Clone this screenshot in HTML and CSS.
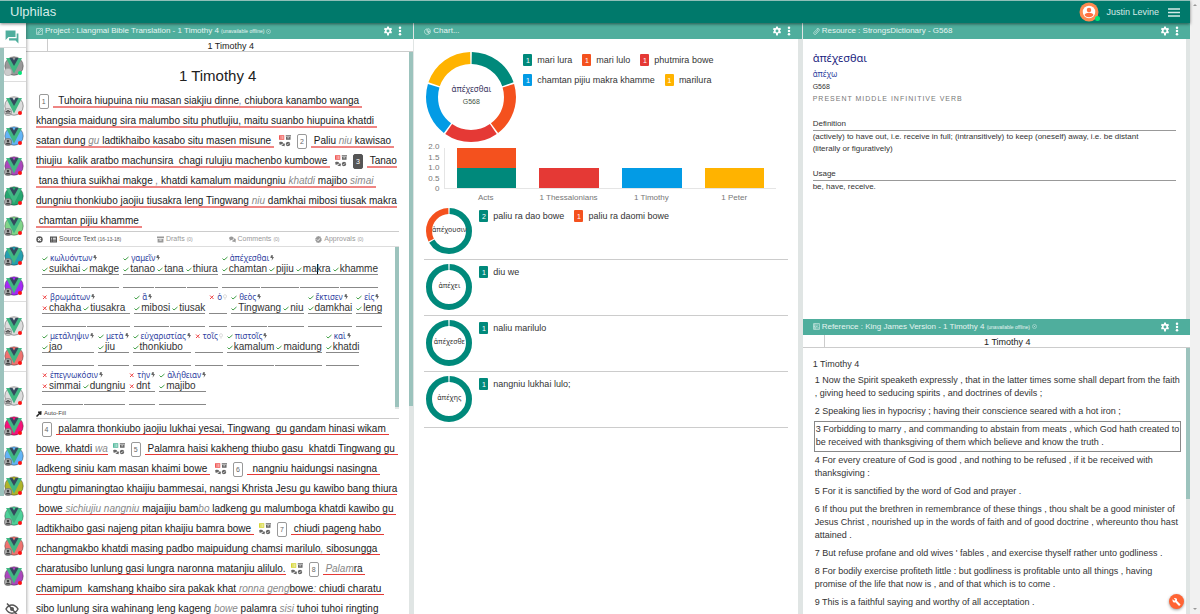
FILE: index.html
```html
<!DOCTYPE html>
<html lang="en">
<head>
<meta charset="utf-8">
<title>Ulphilas</title>
<link rel="stylesheet" href="styles.css">
</head>
<body>
<svg class="defs" aria-hidden="true">
  <symbol id="gear" viewBox="0 0 24 24"><path fill="currentColor" fill-rule="evenodd" d="M10 1h4l.6 3.3 2 1.1 3.100-1.200 2 3.500-2.500 2.200v2.200l2.500 2.200-2 3.500-3.100-1.200-2 1.200L14 23h-4l-.6-5.200-2-1.200-3.100 1.200-2-3.500 2.500-2.200V9.900L2.300 7.700l2-3.500 3.100 1.200 2-1.100zM12 8.500a3.500 3.500 0 1 0 0 7 3.500 3.500 0 0 0 0-7z"/></symbol>
  <symbol id="dots" viewBox="0 0 24 24"><g fill="currentColor"><circle cx="12" cy="4" r="3"/><circle cx="12" cy="12" r="3"/><circle cx="12" cy="20" r="3"/></g></symbol>
  <symbol id="edit" viewBox="0 0 24 24"><path fill="none" stroke="currentColor" stroke-width="2" d="M2 2h20v20H2zM6 18l2-5L18 3M9 18L21 6M6 18l5-1"/></symbol>
  <symbol id="ring" viewBox="0 0 24 24"><circle cx="12" cy="12" r="10" fill="none" stroke="currentColor" stroke-width="2"/><path stroke="currentColor" stroke-width="2" d="M8 8l8 8M16 8l-8 8"/></symbol>
  <symbol id="pie" viewBox="0 0 24 24"><path fill="none" stroke="currentColor" stroke-width="2" d="M10 3a9.500 9.500 0 1 0 8 16l-8-7zM13 2a9 9 0 0 1 9 9h-9zM13 13h9a9 9 0 0 1-3 6z"/></symbol>
  <symbol id="clip" viewBox="0 0 24 24"><path fill="none" stroke="currentColor" stroke-width="2" d="M8 17L17 7a2 2 0 0 0-3-3L4 14a4.500 4.500 0 0 0 6 7L21 9a5.500 5.500 0 0 0-8-7"/></symbol>
  <symbol id="book" viewBox="0 0 24 24"><path fill="none" stroke="currentColor" stroke-width="2" d="M2 2h20v20H2zM7 2v20M10 7h9M10 12h6M2 7h5M2 12h5M2 17h20"/></symbol>
  <symbol id="check" viewBox="0 0 12 12"><path fill="none" stroke="#43a047" stroke-width="2" d="M1 7l3 3 7-6"/></symbol>
  <symbol id="cross" viewBox="0 0 12 12"><path stroke="#ef4444" stroke-width="2" d="M2 3l7 7M9 3l-7 7"/></symbol>
  <symbol id="bolt" viewBox="0 0 12 16"><path fill="#666" d="M3 0h6L8 5h4L5 16l1-8H1z"/></symbol>
  <symbol id="bulb" viewBox="0 0 12 16"><path fill="none" stroke="#bbb" stroke-width="1.500" d="M4 11C0 7 1 1 6 1s6 6 2 10zM4 14h4"/></symbol>
  <symbol id="text-box" viewBox="0 0 24 20"><path fill="currentColor" fill-rule="evenodd" d="M0 0h24v20H0zM4 4v3h3V4zm6 0v3h10V4zM4 9v2h3V9zm6 0v2h10V9zM4 14v2h3v-2zm6 0v2h10v-2z"/></symbol>
  <symbol id="archive" viewBox="0 0 24 20"><path fill="currentColor" fill-rule="evenodd" d="M0 0h24v6H0zM2 8h20v12H2zM8 10v3h8v-3z"/></symbol>
  <symbol id="comments" viewBox="0 0 24 20"><path fill="currentColor" d="M8 0c5 0 8 3 8 6s-3 6-8 6l-6 2 1-4C-2 6 1 0 8 0zM18 6c6 2 7 7 4 9l2 5-6-2c-4 0-7-1-8-4 6 0 8-4 8-8z"/></symbol>
  <symbol id="approved" viewBox="0 0 24 24"><path fill="currentColor" d="M12 0l3 2h4l1 4 3 3-1 3 1 4-3 2-2 4h-4l-3 2-3-2H5l-1-4-3-3 1-3-1-4 3-2 2-4h3z"/><path fill="none" stroke="#fff" stroke-width="3" d="M6 12l4 4 8-8"/></symbol>
  <symbol id="quad" viewBox="0 0 24 24">
    <use href="#text-box" x="0" y="0" width="11" height="10"/>
    <g color="#666"><use href="#archive" x="13" y="0" width="11" height="10"/><use href="#comments" x="0" y="13" width="12" height="10"/><use href="#approved" x="13" y="13" width="10" height="10"/></g>
  </symbol>
  <symbol id="vue" viewBox="0 0 40 40">
    <circle cx="20" cy="20" r="18.500" fill="currentColor" stroke="#000" stroke-opacity=".35" stroke-width="2"/>
    <path fill="#41b883" d="M4 4h9l7 12 7-12h9L20 35z"/>
    <path fill="#35495e" d="M11 4h6l3 5 3-5h6l-9 16z"/>
  </symbol>
  <symbol id="person" viewBox="0 0 16 16"><circle cx="8" cy="8" r="7.500" fill="#aaa" stroke="#555"/><circle cx="8" cy="6" r="2.500" fill="#444"/><path fill="#444" d="M3 13c0-5 10-5 10 0z"/></symbol>
  <symbol id="group" viewBox="0 0 16 16"><circle cx="8" cy="8" r="7.500" fill="#ccc" stroke="#777"/><g fill="#444"><circle cx="8" cy="6" r="2"/><circle cx="4.500" cy="7" r="1.500"/><circle cx="11.500" cy="7" r="1.500"/><path d="M2 11c1-3 11-3 12 0z"/></g></symbol>
  <symbol id="blank" viewBox="0 0 16 16"><circle cx="8" cy="8" r="7.500" fill="#ccc" stroke="#999"/></symbol>
</svg>

<div class="app">
  <div class="window">
    <header class="topbar">
      <h1 class="brand">Ulphilas</h1>
      <div class="account">
        <span class="me"><svg viewBox="0 0 40 40"><circle cx="20" cy="20" r="19" fill="#ff8a50"/><circle cx="20" cy="20" r="12.500" fill="#fff"/><circle cx="20" cy="16" r="4.500" fill="#ff7043"/><path fill="#ff7043" d="M11 26c2-6 16-6 18 0-4 6-14 6-18 0z"/></svg><i class="online"></i></span>
        <span>Justin Levine</span>
        <button class="icon-btn" aria-label="Menu"><svg class="burger" viewBox="0 0 12 9"><path stroke="#d5ebe8" stroke-width="1.500" d="M0 1h12M0 4.500h12M0 8h12"/></svg></button>
      </div>
    </header>

    <div class="main">
      <nav class="sidebar" aria-label="Conversations">
        <button class="chat" aria-label="Chat"><svg viewBox="0 0 24 24"><path fill="#4fae9d" d="M1 1h17v11H6l-5 5zM20 6h3v17l-5-5H7v-4h13z"/></svg></button>
        <div class="people">
          <div class="rail"><div class="thumb people-thumb"></div></div>
          <div class="people-list">
            <div class="crowd first"><span class="av c-gray"><svg><use href="#vue"/></svg><svg class="kind"><use href="#blank"/></svg><i class="on"></i></span></div>
            <div class="crowd">
              <span class="av c-light"><svg><use href="#vue"/></svg><svg class="kind"><use href="#group"/></svg><i></i></span>
              <span class="av c-blue"><svg><use href="#vue"/></svg><svg class="kind"><use href="#person"/></svg><i></i></span>
              <span class="av c-purple"><svg><use href="#vue"/></svg><svg class="kind"><use href="#person"/></svg><i></i></span>
              <span class="av c-green"><svg><use href="#vue"/></svg><svg class="kind"><use href="#person"/></svg><i></i></span>
              <span class="av c-lime"><svg><use href="#vue"/></svg><svg class="kind"><use href="#person"/></svg><i></i></span>
              <span class="av c-teal"><svg><use href="#vue"/></svg><svg class="kind"><use href="#person"/></svg><i></i></span>
              <span class="av c-violet"><svg><use href="#vue"/></svg><svg class="kind"><use href="#person"/></svg><i></i></span>
            </div>
            <div class="crowd">
              <span class="av c-light"><svg><use href="#vue"/></svg><svg class="kind"><use href="#group"/></svg><i></i></span>
              <span class="av c-red"><svg><use href="#vue"/></svg><svg class="kind"><use href="#person"/></svg><i></i></span>
            </div>
            <div class="crowd">
              <span class="av c-light"><svg><use href="#vue"/></svg><svg class="kind"><use href="#group"/></svg><i></i></span>
              <span class="av c-pink"><svg><use href="#vue"/></svg><svg class="kind"><use href="#person"/></svg><i></i></span>
              <span class="av c-blue"><svg><use href="#vue"/></svg><svg class="kind"><use href="#person"/></svg><i></i></span>
              <span class="av c-olive"><svg><use href="#vue"/></svg><svg class="kind"><use href="#person"/></svg><i></i></span>
              <span class="av c-mint"><svg><use href="#vue"/></svg><svg class="kind"><use href="#person"/></svg><i></i></span>
              <span class="av c-red"><svg><use href="#vue"/></svg><svg class="kind"><use href="#person"/></svg><i></i></span>
              <span class="av c-purple"><svg><use href="#vue"/></svg><svg class="kind"><use href="#person"/></svg><i></i></span>
            </div>
          </div>
        </div>
        <button class="hide" aria-label="Hide"><svg viewBox="0 0 28 24"><path fill="none" stroke="#555" stroke-width="3" d="M2 12c6-11 18-11 24 0-6 11-18 11-24 0zM4 1l20 22"/><circle cx="14" cy="12" r="4" fill="#555"/></svg></button>
      </nav>

      <section class="panel">
        <header class="bar"><svg class="bar-icon"><use href="#edit"/></svg><h2>Project : Liangmai Bible Translation - 1 Timothy 4 <small>(unavailable offline)</small></h2><svg class="ring"><use href="#ring"/></svg>
          <button class="icon-btn gear" aria-label="Settings"><svg><use href="#gear"/></svg></button><button class="icon-btn" aria-label="More"><svg><use href="#dots"/></svg></button></header>
        <div class="subbar"><span class="corner"></span><span class="where">1 Timothy 4</span></div>
        <div class="scroller">
          <div class="chapter">
            <h3 class="chapter-title">1 Timothy 4</h3>
            <p class="verses soft"> <b class="no">1</b><span class="t">  Tuhoira hiupuina niu masan siakjiu dinne<em>,</em> chiubora kanambo wanga </span>
<span class="t">khangsia maidung sira malumbo situ phutlujiu, maitu suanbo hiupuina khatdi </span>
<span class="t">satan dung <em>gu</em> ladtikhaibo kasabo situ masen misune </span><svg class="quad q-red"><use href="#quad"/></svg><b class="no">2</b><span class="t"> Paliu <em>niu</em> kawisao </span>
<span class="t">thiujiu  kalik aratbo machunsira  chagi rulujiu machenbo kumbowe </span><svg class="quad q-red"><use href="#quad"/></svg><b class="no current">3</b><span class="t"> Tanao</span>
<span class="t"> tana thiura suikhai makge <em>,</em> khatdi kamalum maidungniu <em>khatdi</em> majibo <em>simai</em> </span>
<span class="t">dungniu thonkiubo jaojiu tiusakra leng Tingwang <em>niu</em> damkhai mibosi tiusak makra</span>
<span class="t"> chamtan pijiu khamme </span></p>
            <div class="tools">
              <div class="tabs">
                <button class="tab-close" aria-label="Close"><svg viewBox="0 0 24 24"><circle cx="12" cy="12" r="11" fill="#555"/><path stroke="#fff" stroke-width="4" d="M7 7l10 10M17 7L7 17"/></svg></button>
                <button class="tab active"><svg><use href="#text-box"/></svg>Source Text <small>(16-13-18)</small></button>
                <button class="tab"><svg><use href="#archive"/></svg>Drafts <small>(0)</small></button>
                <button class="tab"><svg><use href="#comments"/></svg>Comments <small>(0)</small></button>
                <button class="tab"><svg><use href="#approved"/></svg>Approvals <small>(0)</small></button>
              </div>
              <div class="source">
                <div class="words">
                  <div class="row">
                    <div class="word"><div class="gk"><svg><use href="#check"/></svg>κωλυόντων<svg><use href="#bolt"/></svg></div><div class="tg"><span><svg><use href="#check"/></svg>suikhai</span><span><svg><use href="#check"/></svg>makge</span></div><div class="bl"><input aria-label="suikhai"><input aria-label="makge"></div></div>
                    <div class="word"><div class="gk"><svg><use href="#check"/></svg>γαμεῖν<svg><use href="#bolt"/></svg></div><div class="tg"><span><svg><use href="#check"/></svg>tanao</span><span><svg><use href="#check"/></svg>tana</span><span><svg><use href="#check"/></svg>thiura</span></div><div class="bl"><input aria-label="tanao"><input aria-label="tana"><input aria-label="thiura"></div></div>
                    <div class="word"><div class="gk"><svg><use href="#check"/></svg>ἀπέχεσθαι<svg><use href="#bolt"/></svg></div><div class="tg"><span><svg><use href="#check"/></svg>chamtan</span><span><svg><use href="#check"/></svg>pijiu</span><span><svg><use href="#check"/></svg>ma<i class="caret"></i>kra</span><span><svg><use href="#check"/></svg>khamme</span></div><div class="bl"><input aria-label="chamtan"><input aria-label="pijiu"><input aria-label="makra"><input aria-label="khamme"></div></div>
                  </div>
                  <div class="row">
                    <div class="word pad"><div class="gk"><svg><use href="#cross"/></svg>βρωμάτων<svg><use href="#bolt"/></svg></div><div class="tg"><span><svg><use href="#cross"/></svg>chakha</span><span><svg><use href="#check"/></svg>tiusakra</span></div><div class="bl"><input aria-label="chakha"><input aria-label="tiusakra"></div></div>
                    <div class="word"><div class="gk"><svg><use href="#check"/></svg>ἃ<svg><use href="#bolt"/></svg></div><div class="tg"><span><svg><use href="#check"/></svg>mibosi</span><span><svg><use href="#check"/></svg>tiusak</span></div><div class="bl"><input aria-label="mibosi"><input aria-label="tiusak"></div></div>
                    <div class="word"><div class="gk"><svg><use href="#cross"/></svg>ὁ<svg><use href="#bulb"/></svg></div><div class="tg"></div><div class="bl"><input aria-label="ὁ"></div></div>
                    <div class="word"><div class="gk"><svg><use href="#check"/></svg>θεὸς<svg><use href="#bolt"/></svg></div><div class="tg"><span><svg><use href="#check"/></svg>Tingwang</span><span><svg><use href="#check"/></svg>niu</span></div><div class="bl"><input aria-label="Tingwang"><input aria-label="niu"></div></div>
                    <div class="word"><div class="gk"><svg><use href="#check"/></svg>ἔκτισεν<svg><use href="#bolt"/></svg></div><div class="tg"><span><svg><use href="#check"/></svg>damkhai</span></div><div class="bl"><input aria-label="damkhai"></div></div>
                    <div class="word"><div class="gk"><svg><use href="#check"/></svg>εἰς<svg><use href="#bolt"/></svg></div><div class="tg"><span><svg><use href="#check"/></svg>leng</span></div><div class="bl"><input aria-label="leng"></div></div>
                  </div>
                  <div class="row">
                    <div class="word"><div class="gk"><svg><use href="#check"/></svg>μετάληψιν<svg><use href="#bolt"/></svg></div><div class="tg"><span><svg><use href="#check"/></svg>jao</span></div><div class="bl"><input aria-label="jao"></div></div>
                    <div class="word"><div class="gk"><svg><use href="#check"/></svg>μετὰ<svg><use href="#bolt"/></svg></div><div class="tg"><span><svg><use href="#check"/></svg>jiu</span></div><div class="bl"><input aria-label="jiu"></div></div>
                    <div class="word"><div class="gk"><svg><use href="#check"/></svg>εὐχαριστίας<svg><use href="#bolt"/></svg></div><div class="tg"><span><svg><use href="#check"/></svg>thonkiubo</span></div><div class="bl"><input aria-label="thonkiubo"></div></div>
                    <div class="word"><div class="gk"><svg><use href="#cross"/></svg>τοῖς<svg><use href="#bulb"/></svg></div><div class="tg"></div><div class="bl"><input aria-label="τοῖς"></div></div>
                    <div class="word"><div class="gk"><svg><use href="#check"/></svg>πιστοῖς<svg><use href="#bolt"/></svg></div><div class="tg"><span><svg><use href="#check"/></svg>kamalum</span><span><svg><use href="#check"/></svg>maidung</span></div><div class="bl"><input aria-label="kamalum"><input aria-label="maidung"></div></div>
                    <div class="word"><div class="gk"><svg><use href="#check"/></svg>καὶ<svg><use href="#bolt"/></svg></div><div class="tg"><span><svg><use href="#check"/></svg>khatdi</span></div><div class="bl"><input aria-label="khatdi"></div></div>
                  </div>
                  <div class="row">
                    <div class="word"><div class="gk"><svg><use href="#cross"/></svg>ἐπεγνωκόσιν<svg><use href="#bolt"/></svg></div><div class="tg"><span><svg><use href="#cross"/></svg>simmai</span><span><svg><use href="#check"/></svg>dungniu</span></div><div class="bl"><input aria-label="simmai"><input aria-label="dungniu"></div></div>
                    <div class="word"><div class="gk"><svg><use href="#cross"/></svg>τὴν<svg><use href="#bolt"/></svg></div><div class="tg"><span><svg><use href="#cross"/></svg>dnt</span></div><div class="bl"><input aria-label="dnt"></div></div>
                    <div class="word"><div class="gk"><svg><use href="#check"/></svg>ἀλήθειαν<svg><use href="#bolt"/></svg></div><div class="tg"><span><svg><use href="#check"/></svg>majibo</span></div><div class="bl"><input aria-label="majibo"></div></div>
                  </div>
                </div>
                <div class="rail"><div class="thumb source-thumb"></div></div>
              </div>
              <button class="autofill"><svg viewBox="0 0 12 12"><path stroke="#222" stroke-width="3" d="M1 11l7-7"/><path fill="#222" d="M4 1h3l4-1v7L9 8 4 3z"/></svg>Auto-Fill</button>
            </div>
            <p class="verses">  <b class="no">4</b><span class="t"> palamra thonkiubo jaojiu lukhai yesai, Tingwang  gu gandam hinasi wikam </span>
<span class="t">bowe<em>,</em> khatdi <em>wa</em></span><svg class="quad q-green"><use href="#quad"/></svg><b class="no">5</b><span class="t"> Palamra haisi kakheng thiubo gasu  khatdi Tingwang gu </span>
<span class="t">ladkeng siniu kam masan khaimi bowe </span><svg class="quad q-red"><use href="#quad"/></svg><b class="no">6</b><span class="t">  nangniu haidungsi nasingna </span>
<span class="t">dungtu pimaningtao khaijiu bammesai, nangsi Khrista Jesu gu kawibo bang thiura</span>
<span class="t"> bowe <em>sichiujiu nangniu</em> majaijiu bam<em>bo</em> ladkeng gu malumboga khatdi kawibo gu </span>
<span class="t">ladtikhaibo gasi najeng pitan khaijiu bamra bowe </span><svg class="quad q-yellow"><use href="#quad"/></svg><b class="no">7</b><span class="t"> chiudi pageng habo </span>
<span class="t">nchangmakbo khatdi masing padbo maipuidung chamsi marilulo<em>,</em> sibosungga </span>
<span class="t">charatusibo lunlung gasi lungra naronna matanjiu alilulo.</span><svg class="quad q-yellow"><use href="#quad"/></svg><b class="no">8</b><span class="t"> <em>Palam</em>ra </span>
<span class="t">chamipum  kamshang khaibo sira pakak khat <em>ronna geng</em>bowe<em>:</em> chiudi charatu </span>
<span class="t">sibo lunlung sira wahinang leng kageng <em>bowe</em> palamra <em>sisi</em> tuhoi tuhoi ringting </span></p>
          </div>
          <div class="rail"><div class="thumb project-thumb"></div></div>
        </div>
      </section>

      <section class="panel">
        <header class="bar"><svg class="bar-icon"><use href="#pie"/></svg><h2>Chart...</h2>
          <button class="icon-btn gear" aria-label="Settings"><svg><use href="#gear"/></svg></button><button class="icon-btn" aria-label="More"><svg><use href="#dots"/></svg></button></header>
        <div class="scroller">
          <div class="charts">
            <div class="lead">
              <div class="donut big">
                <svg viewBox="0 0 92 92"><g fill="none" stroke-width="12" transform="rotate(-90 46 46)">
                  <circle cx="46" cy="46" r="39" pathLength="100" stroke="#00897b" stroke-dasharray="19.400 80.600" stroke-dashoffset="-0.300"/>
                  <circle cx="46" cy="46" r="39" pathLength="100" stroke="#f4511e" stroke-dasharray="19.400 80.600" stroke-dashoffset="-20.300"/>
                  <circle cx="46" cy="46" r="39" pathLength="100" stroke="#e53935" stroke-dasharray="19.400 80.600" stroke-dashoffset="-40.300"/>
                  <circle cx="46" cy="46" r="39" pathLength="100" stroke="#039be5" stroke-dasharray="19.400 80.600" stroke-dashoffset="-60.300"/>
                  <circle cx="46" cy="46" r="39" pathLength="100" stroke="#ffb300" stroke-dasharray="19.400 80.600" stroke-dashoffset="-80.300"/>
                </g></svg>
                <div class="hub"><span>ἀπέχεσθαι</span><small>G568</small></div>
              </div>
              <ul class="legend">
                <li><b class="k-teal">1</b>mari lura</li><li><b class="k-orange">1</b>mari lulo</li><li><b class="k-red">1</b>phutmira bowe</li>
                <li><b class="k-blue">1</b>chamtan pijiu makra khamme</li><li><b class="k-amber">1</b>marilura</li>
              </ul>
            </div>
            <div class="bars">
              <div class="scale"><span>2.0</span><span>1.5</span><span>1.0</span><span>0.5</span><span>0</span></div>
              <div class="plot">
                <div class="slot"><i class="k-orange" style="height:50%"></i><i class="k-teal" style="height:50%"></i></div>
                <div class="slot"><i class="k-red" style="height:50%"></i></div>
                <div class="slot"><i class="k-blue" style="height:50%"></i></div>
                <div class="slot"><i class="k-amber" style="height:50%"></i></div>
              </div>
              <div class="names"><span>Acts</span><span>1 Thessalonians</span><span>1 Timothy</span><span>1 Peter</span></div>
            </div>
            <div class="form"><div class="donut"><svg viewBox="0 0 48 48"><g fill="none" stroke-width="6" transform="rotate(-90 24 24)"><circle cx="24" cy="24" r="20" pathLength="100" stroke="#00897b" stroke-dasharray="66 34" stroke-dashoffset="-0.500"/><circle cx="24" cy="24" r="20" pathLength="100" stroke="#f4511e" stroke-dasharray="32 68" stroke-dashoffset="-67.500"/></g></svg><div class="hub">ἀπέχουσιν</div></div><ul class="legend"><li><b class="k-teal">2</b>paliu ra dao bowe</li><li><b class="k-orange">1</b>paliu ra daomi bowe</li></ul></div>
            <div class="form"><div class="donut"><svg viewBox="0 0 48 48"><circle cx="24" cy="24" r="20" pathLength="100" fill="none" stroke="#00897b" stroke-width="6" stroke-dasharray="99 1" stroke-dashoffset="-0.500" transform="rotate(-90 24 24)"/></svg><div class="hub">ἀπέχει</div></div><ul class="legend"><li><b class="k-teal">1</b>diu we</li></ul></div>
            <div class="form"><div class="donut"><svg viewBox="0 0 48 48"><circle cx="24" cy="24" r="20" pathLength="100" fill="none" stroke="#00897b" stroke-width="6" stroke-dasharray="99 1" stroke-dashoffset="-0.500" transform="rotate(-90 24 24)"/></svg><div class="hub">ἀπέχεσθε</div></div><ul class="legend"><li><b class="k-teal">1</b>naliu marilulo</li></ul></div>
            <div class="form"><div class="donut"><svg viewBox="0 0 48 48"><circle cx="24" cy="24" r="20" pathLength="100" fill="none" stroke="#00897b" stroke-width="6" stroke-dasharray="99 1" stroke-dashoffset="-0.500" transform="rotate(-90 24 24)"/></svg><div class="hub">ἀπέχης</div></div><ul class="legend"><li><b class="k-teal">1</b>nangniu lukhai lulo;</li></ul></div>
          </div>
          <div class="rail"></div>
        </div>
      </section>

      <div class="stack">
        <section class="panel">
          <header class="bar"><svg class="bar-icon"><use href="#clip"/></svg><h2>Resource : StrongsDictionary - G568</h2>
            <button class="icon-btn gear" aria-label="Settings"><svg><use href="#gear"/></svg></button><button class="icon-btn" aria-label="More"><svg><use href="#dots"/></svg></button></header>
          <div class="scroller">
            <div class="entry">
              <div class="lemma">ἀπέχεσθαι</div>
              <div class="root">ἀπέχω</div>
              <div class="code">G568</div>
              <div class="morph">PRESENT MIDDLE INFINITIVE VERB</div>
              <h4>Definition</h4>
              <p>(actively) to have out, i.e. receive in full; (intransitively) to keep (oneself) away, i.e. be distant<br>(literally or figuratively)</p>
              <h4>Usage</h4>
              <p>be, have, receive.</p>
            </div>
            <div class="rail"></div>
          </div>
        </section>
        <section class="panel">
          <header class="bar"><svg class="bar-icon"><use href="#book"/></svg><h2>Reference : King James Version - 1 Timothy 4 <small>(unavailable offline)</small></h2><svg class="ring"><use href="#ring"/></svg>
            <button class="icon-btn gear" aria-label="Settings"><svg><use href="#gear"/></svg></button><button class="icon-btn" aria-label="More"><svg><use href="#dots"/></svg></button></header>
          <div class="subbar"><span class="corner"></span><span class="where">1 Timothy 4</span></div>
          <div class="scroller">
            <div class="bible">
              <h3>1 Timothy 4</h3>
              <p>1 Now the Spirit speaketh expressly , that in the latter times some shall depart from the faith<br>, giving heed to seducing spirits , and doctrines of devils ;</p>
              <p>2 Speaking lies in hypocrisy ; having their conscience seared with a hot iron ;</p>
              <p class="selected">3 Forbidding to marry , and commanding to abstain from meats , which God hath created to<br>be received with thanksgiving of them which believe and know the truth .</p>
              <p>4 For every creature of God is good , and nothing to be refused , if it be received with<br>thanksgiving :</p>
              <p>5 For it is sanctified by the word of God and prayer .</p>
              <p>6 If thou put the brethren in remembrance of these things , thou shalt be a good minister of<br>Jesus Christ , nourished up in the words of faith and of good doctrine , whereunto thou hast<br>attained .</p>
              <p>7 But refuse profane and old wives ' fables , and exercise thyself rather unto godliness .</p>
              <p>8 For bodily exercise profiteth little : but godliness is profitable unto all things , having<br>promise of the life that now is , and of that which is to come .</p>
              <p>9 This is a faithful saying and worthy of all acceptation .</p>
            </div>
            <div class="rail"><div class="thumb bible-thumb"></div></div>
          </div>
        </section>
      </div>
    </div>
    <button class="fab" aria-label="Tools"><svg viewBox="0 0 24 24"><path fill="#fff" d="M22 19l-9-9c1-3 0-5-1-6-2-2-5-2-7-1l4 4-3 3-4-4c-1 2-1 5 1 7 2 2 4 2 6 1l9 9c1 1 2 0 2 0l2-2c1-1 1-1 0-2z"/></svg></button>
  </div>
  <div class="page-scroll"><i class="up"></i><i class="down"></i></div>
</div>
</body>
</html>
```

FILE: styles.css
```css
* { box-sizing: border-box; }
body { margin: 0; font-family: "Liberation Sans", Arial, sans-serif; font-size: 9px; color: #333; background: #fff; }
h1, h2, h3, h4, p, ul { margin: 0; padding: 0; font-weight: normal; }
button { border: 0; padding: 0; background: none; font: inherit; color: inherit; display: flex; align-items: center; }
svg { display: block; flex: none; }
.defs { position: absolute; width: 0; height: 0; }

.app { display: flex; height: 100vh; overflow: hidden; }
.window { flex: 1; min-width: 0; display: flex; flex-direction: column; position: relative; }
.page-scroll { width: 10px; background: #f1f1f1; display: flex; flex-direction: column; justify-content: space-between; align-items: center; padding: 4px 0; }
.page-scroll i { border: 2px solid transparent; }
.page-scroll .up { border-top: 0; border-bottom-color: #999; }
.page-scroll .down { border-bottom: 0; border-top-color: #999; }

.topbar { flex: none; height: 23px; background: #00796b; border-top: 1px solid #8fbfb8; color: #d5ebe8; display: flex; align-items: center; justify-content: space-between; padding: 0 10px; box-shadow: 0 1px 3px rgba(0,0,0,.5); position: relative; z-index: 2; }
.brand { font-size: 13px; line-height: 20px; }
.account { display: flex; align-items: center; gap: 7px; }
.me { position: relative; }
.me svg { width: 20px; height: 20px; }
.online { position: absolute; right: -1px; bottom: 1px; width: 5px; height: 5px; border-radius: 50%; background: #00e676; }
.burger { width: 12px; height: 9px; margin-left: 2px; }

.main { flex: 1; min-height: 0; display: flex; }
.sidebar { width: 26px; flex: none; display: flex; flex-direction: column; box-shadow: 1px 0 3px rgba(0,0,0,.3); position: relative; z-index: 1; background: #fff; }
.chat { height: 25px; flex: none; padding: 3px 5px 0; border-bottom: 1px solid #ddd; }
.chat svg { width: 14px; height: 14px; }
.people { flex: 1; min-height: 0; display: flex; overflow: hidden; }
.people-list { flex: 1; }
.crowd { padding-top: 10px; border-top: 1px solid #ddd; margin-top: -1px; }
.crowd.first { padding-top: 4px; border: 0; margin: 0; }
.av { position: relative; display: block; height: 30px; padding-top: 4px; }
.av > svg { width: 20px; height: 20px; }
.av .kind { position: absolute; left: 0; bottom: 6px; width: 8px; height: 8px; }
.av i { position: absolute; left: 14px; bottom: 7px; width: 4px; height: 4px; border-radius: 50%; background: #f11; }
.av i.on { background: #00e676; }
.c-gray { color: #999; } .c-light { color: #ddd; } .c-blue { color: #64b5f6; } .c-purple { color: #ab47bc; }
.c-green { color: #26a670; } .c-lime { color: #81d58a; } .c-teal { color: #26a0b0; } .c-violet { color: #a52af5; }
.c-red { color: #ef7370; } .c-pink { color: #f5147a; } .c-olive { color: #afb42b; } .c-mint { color: #4fd19a; }
.hide { height: 20px; flex: none; padding: 9px 5px 0; }
.hide svg { width: 14px; height: 12px; }

.rail { width: 4px; flex: none; background: #e0e5e4; }
.thumb { background: #9cc3bd; }
.people .rail { background: #fff; }
.people-thumb { height: 82%; }
.project-thumb { height: 63%; }
.source-thumb { height: 99%; }
.bible-thumb { height: 57%; }

.panel { flex: 1; min-width: 0; min-height: 0; display: flex; flex-direction: column; overflow: hidden; background: #fff; }
.panel + .panel, .stack { border-left: 1px solid #e0e5e4; }
.stack { flex: 1; min-width: 0; display: flex; flex-direction: column; }
.stack .panel { border-left: 0; }
.bar { height: 16px; flex: none; background: #4fae9d; color: #e6f4f1; display: flex; align-items: center; padding: 0 8px 0 10px; }
.bar h2 { font-size: 8px; line-height: 12px; white-space: nowrap; }
.bar small { font-size: 5px; }
.bar-icon { width: 7px; height: 7px; margin-right: 2px; }
.ring { width: 5px; height: 5px; margin-left: 2px; }
.icon-btn svg { width: 10px; height: 10px; }
.icon-btn svg.burger { width: 12px; height: 9px; }
.bar .icon-btn { color: #fff; }
.bar .gear { margin-left: auto; margin-right: 2px; }
.subbar { height: 13px; flex: none; border-bottom: 1px solid #ccc; display: flex; }
.corner { width: 22px; border-right: 1px solid #ccc; }
.where { flex: 1; text-align: center; font-size: 9px; line-height: 14px; color: #222; }
.scroller { flex: 1; min-height: 0; display: flex; overflow: hidden; }

.chapter { flex: 1; min-width: 0; padding: 9px 10px 0; }
.chapter-title { font-size: 15px; line-height: 30px; text-align: center; color: #212121; }
.verses { font-size: 10px; line-height: 20px; white-space: pre; color: #1a1a1a; }
.t { border-bottom: 1px solid #e53935; }
.soft .t { border-bottom: 2px solid #ef8583; }
.t em { color: #888; }
.no { display: inline-block; width: 10px; height: 15px; margin-right: 4px; border: 1px solid #999; border-radius: 2px; font-size: 7px; line-height: 14px; font-weight: normal; text-align: center; color: #666; vertical-align: middle; }
.no.current { background: #555; border-color: #555; color: #fff; }
.quad { display: inline-block; width: 12px; height: 12px; margin: 0 6px 0 5px; vertical-align: middle; }
.q-red { color: #ef5350; } .q-green { color: #4db699; } .q-yellow { color: #d4d42c; }

.tools { border-top: 1px solid #ccc; border-bottom: 1px solid #ccc; }
.tabs { display: flex; align-items: center; height: 15px; border-bottom: 1px solid #ddd; }
.tab { font-size: 7px; line-height: 12px; color: #999; gap: 2px; margin-right: auto; }
.tab.active { color: #555; }
.tab small { font-size: 5px; }
.tab svg { width: 7px; height: 7px; }
.tab-close { margin-right: 7px; }
.tab-close svg { width: 7px; height: 7px; }
.source { display: flex; height: 162px; }
.words { flex: 1; padding: 6px 0 0 6px; }
.row { display: flex; gap: 4px; height: 39px; }
.gk { display: flex; align-items: center; gap: 1px; height: 10px; font-family: "Noto Sans", sans-serif; font-size: 8px; line-height: 10px; color: #303f9f; white-space: nowrap; }
.gk svg:first-child { width: 6px; height: 6px; margin-right: 1px; }
.gk svg:last-child { width: 4px; height: 6px; }
.tg { display: flex; gap: 2px; height: 12px; border-bottom: 1px solid #888; font-size: 10px; line-height: 11px; color: #333; }
.tg span { display: flex; align-items: center; }
.tg svg { width: 6px; height: 6px; margin-right: 1px; }
.pad .tg { padding-right: 5px; }
.caret { width: 1px; height: 10px; background: #000; margin-right: -1px; }
.bl { display: flex; gap: 1px; height: 13px; }
.bl input { flex: 1; width: 0; min-width: 0; padding: 0; border: 0; border-bottom: 1px solid #888; background: none; font-size: 8px; outline: 0; }
.autofill { font-size: 6px; line-height: 9px; height: 9px; gap: 2px; color: #444; }
.autofill svg { width: 6px; height: 6px; }

.charts { flex: 1; min-width: 0; padding: 12px 10px 0; }
.lead { display: flex; gap: 6px; }
.donut { position: relative; width: 48px; height: 48px; flex: none; }
.donut svg { width: 100%; height: 100%; }
.donut.big { width: 92px; height: 92px; margin-left: 1px; }
.hub { position: absolute; inset: 0; display: flex; flex-direction: column; align-items: center; justify-content: center; font-family: "Noto Sans", sans-serif; font-size: 7px; line-height: 8px; color: #333; padding-bottom: 2px; }
.big .hub { font-size: 8px; line-height: 13px; color: #3a3560; padding-bottom: 5px; }
.big .hub small { font-family: "Liberation Sans", sans-serif; font-size: 7px; color: #445544; }
.legend { list-style: none; display: flex; flex-wrap: wrap; gap: 8px 10px; align-content: flex-start; padding-top: 3px; font-size: 9px; line-height: 12px; }
.legend li { display: flex; gap: 5px; }
.legend b { width: 9px; height: 12px; border-radius: 1px; color: #fff; font-weight: normal; font-size: 7px; text-align: center; line-height: 13px; }
.lead .legend { max-width: 220px; }
.k-teal { background: #00897b; } .k-orange { background: #f4511e; } .k-red { background: #e53935; } .k-blue { background: #039be5; } .k-amber { background: #ffb300; }
.bars { display: grid; grid-template-columns: 15px 1fr; column-gap: 5px; padding: 5px 12px 0 0; font-size: 8px; line-height: 8px; color: #777; }
.scale { display: flex; flex-direction: column; justify-content: space-between; text-align: right; margin: -5px 0 -4px; }
.plot { display: flex; height: 41px; border-left: 1px solid #e5e5e5; border-bottom: 1px solid #e5e5e5; }
.slot { flex: 1; display: flex; flex-direction: column; justify-content: flex-end; align-items: center; }
.slot i { width: 72%; }
.names { grid-column: 2; display: flex; padding: 5px 0 2px; }
.names span { flex: 1; text-align: center; }
.form { display: flex; gap: 6px; height: 56px; border-bottom: 1px solid #ccc; padding: 3px 0 0 1px; }

.entry { flex: 1; padding: 10px 10px 0; font-size: 8px; line-height: 12px; }
.lemma { font-family: "Noto Sans", sans-serif; font-size: 11px; line-height: 18px; color: #1a237e; }
.root { font-family: "Noto Sans", sans-serif; font-size: 8px; line-height: 14px; color: #303f9f; }
.code { font-size: 7px; line-height: 12px; }
.morph { font-size: 7px; line-height: 12px; letter-spacing: 1px; color: #777; }
.entry h4 { margin-top: 13px; font-size: 8px; line-height: 12px; border-bottom: 1px solid #999; }
.entry p { line-height: 12px; }
.bible { flex: 1; min-width: 0; padding: 10px 4px 0 10px; font-size: 9px; line-height: 13px; white-space: nowrap; }
.bible h3 { font-size: 9px; line-height: 13px; margin-bottom: 1px; }
.bible p { margin: 0 1px; padding: 2px 1px 3px; }
.bible .selected { border: 1px solid #888; padding: 1px 0 2px 1px; }

.fab { position: absolute; right: 6px; bottom: 5px; width: 15px; height: 15px; border-radius: 50%; background: #ff6434; justify-content: center; box-shadow: 0 1px 3px rgba(0,0,0,.4); }
.fab svg { width: 9px; height: 9px; }
```
